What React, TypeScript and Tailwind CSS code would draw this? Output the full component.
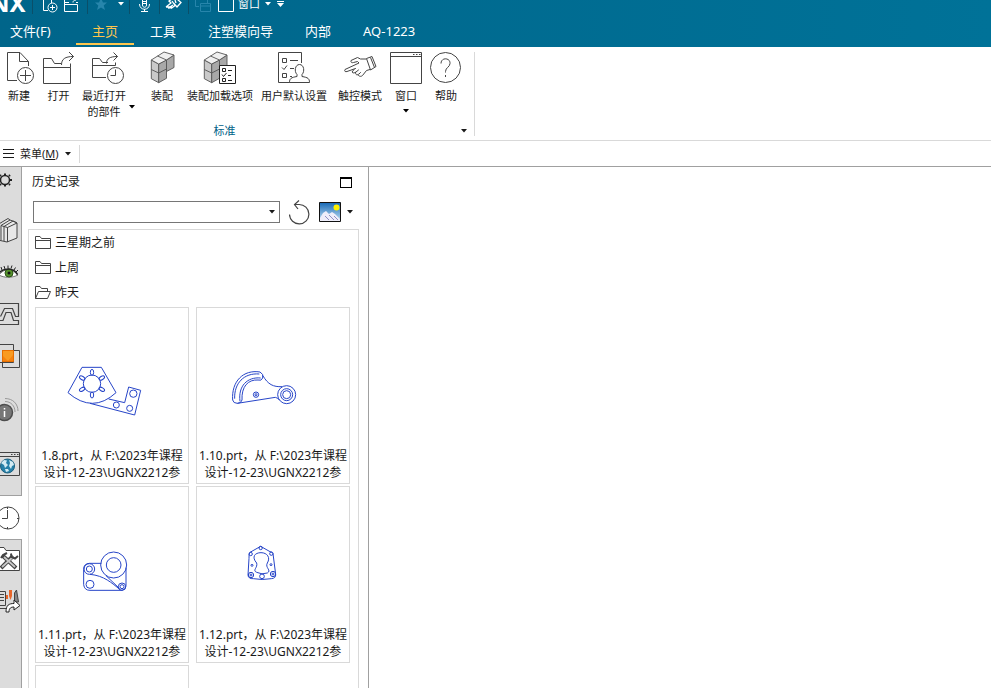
import clsx from 'clsx'
import type { ReactNode } from 'react'

const tabs = ['主页', '工具', '注塑模向导', '内部', 'AQ-1223']

function Caret({ className }: { className?: string }) {
  return (
    <svg width="6" height="4" viewBox="0 0 6 4" fill="currentColor" className={clsx('shrink-0', className)}>
      <path d="M0 0H6L3 3.5Z" />
    </svg>
  )
}

function Line({ w, h, children }: { w: number; h: number; children: ReactNode }) {
  return (
    <svg
      width={w}
      height={h}
      viewBox={`0 0 ${w} ${h}`}
      fill="none"
      stroke="currentColor"
      strokeWidth="1"
      className="shrink-0"
      aria-hidden="true"
    >
      {children}
    </svg>
  )
}

/* ---------- title bar ---------- */

function QuickSeparator({ className }: { className?: string }) {
  return <span className={clsx('h-[14px] w-px shrink-0 bg-[#0a4f69]', className)} />
}

function QuickBar() {
  return (
    <div className="flex h-[14px] items-start">
      <span className="-ml-[10px] flex h-[14px] w-[42px] items-end text-[24px] leading-[23px] font-bold">
        NX
      </span>
      <QuickSeparator />
      <button type="button" aria-label="新建" className="ml-[9px]">
        <Line w={16} h={14}>
          <path d="M1.5 0V10.5H6M9.5 0V3" />
          <circle cx="10.5" cy="7.5" r="4.5" />
          <path d="M8 7.5H13M10.5 5V10" />
        </Line>
      </button>
      <button type="button" aria-label="打开" className="ml-[6px]">
        <Line w={16} h={14}>
          <path d="M.5 0V11.5H13.5V4.5H.5M1 2.5H5M9 2.5C9 1 10 0 12 0M12 2.5H14" />
        </Line>
      </button>
      <QuickSeparator className="ml-[7px]" />
      <button type="button" aria-label="收藏" className="ml-[6px] text-[#2785ab]">
        <svg width="14" height="14" fill="currentColor" className="block">
          <path d="M7 -2L9 2.5H13L9.7 5.5L11 10L7 7.5L3 10L4.3 5.5L1 2.5H5Z" />
        </svg>
      </button>
      <button type="button" aria-label="收藏选项" className="ml-[10px] pt-[2px]">
        <Caret />
      </button>
      <QuickSeparator className="ml-[5px]" />
      <button type="button" aria-label="语音" className="ml-[8px]">
        <Line w={14} h={14}>
          <path d="M4.5 0V5C4.5 8 8.500 8 8.5 5V0M1.5 4C1.5 11 11.5 11 11.5 4M6.5 9V11.5M3 11.5H10M5 1.5H8M5 3.5H8" />
        </Line>
      </button>
      <QuickSeparator className="ml-[7px]" />
      <button type="button" aria-label="触控模式" className="ml-[5px]">
        <Line w={18} h={14}>
          <path d="M1 7L6 3L4 1L7 -1M1 7H5L8 5M3 8L7 7.5M6 8.5L10 5.5L7 1M10 0L11 3M12 -1L16 2.5L12 7L8.5 3" strokeWidth="1.3" />
        </Line>
      </button>
      <QuickSeparator className="ml-[5px]" />
      <button type="button" aria-label="层叠窗口" className="ml-[6px] text-[#2785ab]">
        <Line w={17} h={14}>
          <path d="M.5 0V6.5H4M5.5 3.5H15.5V11.5H5.5ZM5.5 6H15.5M12.5 0V3" />
        </Line>
      </button>
      <button type="button" className="ml-[6px] flex items-start">
        <Line w={17} h={14}>
          <path d="M.5 0V11.5H15.5V0" />
        </Line>
        <span className="ml-[3px] text-[11px] leading-[8px]">窗口</span>
        <Caret className="mt-[2px] ml-[5px]" />
      </button>
      <button type="button" aria-label="自定义快速访问工具栏" className="ml-[6px] pt-px">
        <svg width="7" height="6" fill="currentColor" className="block">
          <path d="M0 0H7V1H0ZM0 2H7L3.5 6Z" />
        </svg>
      </button>
    </div>
  )
}

function TitleBar() {
  return (
    <header className="shrink-0 bg-linear-to-r from-[#00658a] to-[#007298] text-white">
      <QuickBar />
      <nav className="flex h-[33px] pt-[2px] text-[13px] leading-[31px]">
        <button type="button" className="w-[76px] pl-[10px] text-left">
          文件(F)
        </button>
        {tabs.map((tab, i) => (
          <button
            key={tab}
            type="button"
            className={clsx(
              'relative h-[31px] px-4 whitespace-nowrap',
              i === 0 && 'text-[#ffc64d]',
            )}
          >
            {tab}
            {i === 0 && <span className="absolute inset-x-0 bottom-[2px] h-[2px] bg-[#ffc64d]" />}
          </button>
        ))}
      </nav>
    </header>
  )
}

/* ---------- ribbon ---------- */

function NewIcon() {
  return (
    <Line w={30} h={34}>
      <path d="M13 29.5H3.5V1.5H16L24.5 10.5V15M15.5 1.5V10.5H24.5" />
      <circle cx="21.5" cy="24.5" r="8" />
      <path d="M16 24.5H27M21.5 19V30" />
    </Line>
  )
}

function OpenIcon() {
  return (
    <Line w={32} h={34}>
      <path d="M.5 32.5V7.5H8.5L11.5 12.5H18M.5 16.5H27.5V32.5H.5M27.5 16.5V12.5" />
      <path d="M18.5 14C18.5 8 22 5.5 30.5 5.5M26 1L30.5 5.5L26 10" />
    </Line>
  )
}

function RecentIcon() {
  return (
    <Line w={40} h={34}>
      <path d="M22 26.5H8.5V7.5H15.5L18.5 11.5H24M8.5 14.5H31.5V11.5" />
      <path d="M22.5 12.5C22.5 7.5 26 5.5 33.5 5.5M29.5 1.5L33.5 5.5L29.5 9.5" />
      <circle cx="31.5" cy="24.5" r="8" />
      <path d="M31.5 18.5V24.5H26.5" />
    </Line>
  )
}

function Cubes() {
  return (
    <g stroke="#555" strokeWidth=".9" strokeLinejoin="round">
      <path d="M5.3 9L12.7 13V31.7L5.3 27.7Z" fill="#c9c9c9" />
      <path d="M12.7 13L20.5 9V27.3L12.7 31.7Z" fill="#a8a8a8" />
      <path d="M20.5 9L28 4V16.5L20.5 20.5Z" fill="#a8a8a8" />
      <path d="M5.3 9L18 1L28 4L20.5 9L12.7 13Z" fill="#f0f0f0" />
      <path d="M11.5 5L20.5 9M5.3 18.5L12.7 22L20.5 18" />
    </g>
  )
}

function AssemblyIcon() {
  return (
    <Line w={32} h={34}>
      <Cubes />
    </Line>
  )
}

function LoadOptionsIcon() {
  return (
    <Line w={36} h={34}>
      <g transform="translate(-3 0)">
        <Cubes />
      </g>
      <path d="M17.5 14.5H33.5V32.5H17.5Z" fill="#fff" stroke="#222" />
      <path
        d="M20.5 17.5H23.5V20.5H20.5ZM20.5 27.5H23.5V30.5H20.5ZM20 23.5L21.5 25.5L24.5 22M26 19.5H30M26 24.5H29M26 29.5H30"
        stroke="#222"
      />
    </Line>
  )
}

function DefaultsIcon() {
  return (
    <Line w={34} h={34}>
      <path d="M13 31.5H1.5V1.5H24.5V12M5.5 7.5H9.5V11.5H5.5ZM5.5 22.5H9.5V26.5H5.5ZM5 16.5L7 18.5L10 14.5M13 9.5H21M13 17.5H17M13 25.5H15" />
      <path
        d="M12.5 31.5C12.5 27.5 14 26.5 20 25.5V23.5C17 20.5 18 13.5 22.5 13.5S28 20.5 25 23.5V25.5C31 26.5 32.5 27.5 32.5 31.5Z"
        fill="#fff"
      />
    </Line>
  )
}

function TouchIcon() {
  return (
    <Line w={36} h={34}>
      <path
        strokeLinejoin="round"
        strokeLinecap="round"
        d="M24 8H18.5L15.5 6.5L9 9.5C8.500 11.5 10 12 11.5 11.5L15.5 10.5L17 12L3 18.5C2 20.5 3.5 21 5 20.5L13.5 17.5M12 18.5L10 21C11 22.5 12.5 22 14 21L16.5 19M13.5 21.5C13.5 24 15 24.5 17 23L18.5 21.5M16 24C17.5 26 19.5 25.5 20.5 24.5L24.5 19.5L28 18.5"
      />
      <path strokeLinejoin="round" d="M24.5 7.5L30 5.5L34 15.5L28.5 19ZM28.5 6.5L32.5 16.5" />
    </Line>
  )
}

function WindowIcon() {
  return (
    <Line w={32} h={34}>
      <path d="M.5 1.5H31.5V32.5H.5ZM.5 5.5H31.5" />
      <path d="M23 3.5H24.5M26 3.5H27.5M29 3.5H30.5" />
    </Line>
  )
}

function HelpIcon() {
  return (
    <Line w={32} h={34}>
      <circle cx="15.5" cy="16.5" r="15" />
      <path d="M11 12.5C11 6 20.5 6.5 20 12.5C20 16 15.5 16.5 15.5 20.5V21.5M15.5 24V26" />
    </Line>
  )
}

interface RibbonButtonProps {
  icon: ReactNode
  label: ReactNode
  className?: string
  dropdown?: 'below' | 'beside'
}

function RibbonButton({ icon, label, className, dropdown }: RibbonButtonProps) {
  return (
    <button type="button" className={clsx('flex shrink-0 items-start', className)}>
      <span className="flex flex-1 flex-col items-center text-[#444]">
        {icon}
        <span className="mt-[3px] text-[11px] leading-4 whitespace-nowrap text-[#1a1a1a]">{label}</span>
        {dropdown === 'below' && <Caret className="mt-[5px] text-black" />}
      </span>
      {dropdown === 'beside' && <Caret className="mt-[54px] text-black" />}
    </button>
  )
}

function Ribbon() {
  return (
    <section className="flex h-[94px] shrink-0 border-b border-[#d9d9d9] bg-white">
      <div className="flex flex-col">
        <div className="flex h-[75px] items-start pt-1">
          <RibbonButton className="w-[38px]" icon={<NewIcon />} label="新建" />
          <RibbonButton className="w-[41px]" icon={<OpenIcon />} label="打开" />
          <RibbonButton
            className="w-[56px]"
            icon={<RecentIcon />}
            label={
              <>
                最近打开
                <br />
                的部件
              </>
            }
            dropdown="beside"
          />
          <RibbonButton className="ml-[9px] w-9" icon={<AssemblyIcon />} label="装配" />
          <RibbonButton className="ml-1 w-[72px]" icon={<LoadOptionsIcon />} label="装配加载选项" />
          <RibbonButton className="ml-[2px] w-[72px]" icon={<DefaultsIcon />} label="用户默认设置" />
          <RibbonButton className="ml-[6px] w-12" icon={<TouchIcon />} label="触控模式" />
          <RibbonButton className="ml-1 w-9" icon={<WindowIcon />} label="窗口" dropdown="below" />
          <RibbonButton className="mr-[3px] ml-1 w-9" icon={<HelpIcon />} label="帮助" />
        </div>
        <div className="flex items-center text-[11px] leading-[18px]">
          <span className="flex-1 pr-3 text-center text-[#005f87]">标准</span>
          <button type="button" aria-label="标准组选项">
            <Caret />
          </button>
        </div>
      </div>
      <span className="mt-[5px] mb-1 ml-[7px] w-px bg-[#d9d9d9]" />
    </section>
  )
}

function MenuRow() {
  return (
    <div className="flex h-[26px] shrink-0 items-center border-b border-[#a0a0a0] bg-white">
      <button type="button" className="flex items-center pl-[3px] text-[11px] leading-[18px]">
        <Line w={11} h={11}>
          <path d="M0 1.5H11M0 5.5H11M0 9.5H11" />
        </Line>
        <span className="ml-[6px] whitespace-nowrap">
          菜单(<u>M</u>)
        </span>
        <Caret className="ml-[6px]" />
      </button>
      <span className="ml-2 h-[18px] w-px bg-[#d9d9d9]" />
    </div>
  )
}

/* ---------- resource bar ---------- */

const resources = [
  {
    label: '资源条选项',
    className: 'h-[26px]',
    icon: (
      <>
        <circle cx="5" cy="13" r="4.5" strokeWidth="1.5" stroke="#222" />
        <path
          d="M5 6.500V8.500M5 17.500V19.500M9.500 13H12M9 9L10 8M9 17L10 18M1 9L0 8M1 17L0 18"
          strokeWidth="2"
          stroke="#222"
        />
      </>
    ),
  },
  {
    label: '重用库',
    className: 'mt-4 h-[42px]',
    icon: (
      <>
        <path d="M-2 7.500L8 1.500L10 3M-2 7.500V23L7 25L17 21V6L14 4.500L10 3L1 8.500V23.500" fill="#e8e8e8" />
        <path d="M1 8.500L4 9.500V24M4 9.500L13 4L17 6L7.500 10.500L4 9.500M7.500 10.500V25" />
      </>
    ),
  },
  {
    label: '视图',
    className: 'h-10',
    icon: (
      <>
        <path d="M-1 17C4 10 12 10 18 17C12 20 4 20 -1 17Z" fill="#fff" strokeWidth=".7" />
        <circle cx="9" cy="15" r="4" fill="#55912c" stroke="#2d5518" />
        <circle cx="9" cy="15" r="1.5" fill="#111" stroke="none" />
        <path d="M-1 15C4 10 13 9 17.500 16.500" stroke="#222" strokeWidth="1.5" />
        <path d="M2 12L1 9M5 11L4 8M8 10.5V7.500M11 10.5L12 7.500M14 12L15.500 9.500M16 14L18 12" stroke="#222" />
      </>
    ),
  },
  {
    label: '装配导航器',
    className: 'mt-[2px] h-[42px]',
    icon: (
      <path
        d="M-1 2.5H18.5V15.5H15.5L12.5 7.5H4.5L.5 15.5M-1 23.5H18.5V19.5H13.5L11 11.5H6L3 19.5H-1"
        strokeWidth="1.2"
      />
    ),
  },
  {
    label: '约束导航器',
    className: 'h-[42px]',
    icon: (
      <>
        <path d="M-1 1.5H13.5V19.5H-1ZM2.5 7.5H19.5V24.5H2.5Z" />
        <path d="M2.5 7.5H13.5V18.5H2.5Z" fill="#f99b22" stroke="#e86f00" />
        <path d="M3 18V13L8 18ZM8 18L13 12V18Z" fill="#f58210" stroke="none" />
      </>
    ),
  },
  {
    label: '部件信息',
    className: 'mt-3 h-[42px]',
    icon: (
      <>
        <circle cx="4.500" cy="15.500" r="8" fill="#777" stroke="#4d4d4d" strokeWidth="1.5" />
        <path d="M4.500 14V20M4.500 11V12.500" stroke="#fff" strokeWidth="1.5" />
        <path d="M5 4.500C11 4.500 15 9 15 15M5 1.500C13 1.500 18 7 18 14" stroke="#999" />
      </>
    ),
  },
  {
    label: '网页浏览器',
    className: 'mt-3 h-[42px]',
    icon: (
      <>
        <path d="M-1 1.5H19.5V24.5H-1M-1 5.5H19.5M11 3.5H12.500M14 3.5H15.500M17 3.5H18.500" />
        <circle cx="7.500" cy="15" r="7" fill="#2680a8" stroke="#1b607f" />
        <path
          d="M1 12L4 9L7 9.500L6 12L8 14L5 17L4 14ZM9 9L13 11L14 14L12 15L11 18L9 15L10 12ZM5 18L8 18L9 20L6 21Z"
          fill="#d3ebf3"
          stroke="none"
        />
      </>
    ),
  },
  {
    label: '历史记录',
    className: 'mt-[10px] -mr-px h-[45px] border-y border-[#a0a0a0] bg-white',
    icon: (
      <>
        <circle cx="8" cy="13" r="11" />
        <path d="M7.500 5V13.500H2M7.500 2V4M19 13.500H17M7.500 22V24" />
      </>
    ),
  },
  {
    label: '工艺资源',
    className: 'h-10',
    icon: (
      <>
        <path d="M-1 .5H4L6 3.5H19.5V23.5H-1" fill="#fff" />
        <path d="M3 9L16 21M13 9L1 21" stroke="#444" strokeWidth="4" />
        <path d="M4 10L15 20M13 10L2 20" stroke="#c8c8c8" strokeWidth="1.8" />
        <path d="M1 11L3 8L7 6M11 6.500L11.500 10L15 11.500L18 9" stroke="#444" strokeWidth="2" />
      </>
    ),
  },
  {
    label: '加工向导',
    className: 'h-[42px]',
    icon: (
      <>
        <path d="M-1 3.500H5.500V17.500H-1M0 6.500H4M0 9.500H4M0 12.500H4M-1 20.500H7" fill="#ddd" />
        <path d="M9 2H12V8L10.500 12L9 8ZM6 7H8V11H6Z" fill="#e8662a" stroke="none" />
        <path d="M14.500 14V5L16.500 2L18.500 14Z" fill="#888" />
        <path d="M6 24C6 17 9 15.500 14 15.500V12L20 17.500L14 22V19C11 19 9 20 9 24Z" fill="#fff" stroke="#222" />
      </>
    ),
  },
]

function ResourceBar() {
  return (
    <aside className="flex w-[22px] shrink-0 flex-col border-r border-[#a0a0a0] bg-[#dcdcdc] text-[#444]">
      {resources.map((r) => (
        <button
          key={r.label}
          type="button"
          aria-label={r.label}
          className={clsx('flex shrink-0 items-center', r.className)}
        >
          <Line w={21} h={26}>
            {r.icon}
          </Line>
        </button>
      ))}
    </aside>
  )
}

/* ---------- history panel ---------- */

function FolderIcon({ open }: { open?: boolean }) {
  return (
    <Line w={16} h={14}>
      {open ? (
        <path d="M.5 12.5V.5H5L6.500 2.500H12.500V5.500M.5 12.5L3.500 5.500H15.500L12.500 12.5Z" />
      ) : (
        <path d="M.5 12.5V.5H5L6.500 2.500H15.500V12.5ZM.5 4.500H15.500" />
      )}
    </Line>
  )
}

const groups = [
  { name: '三星期之前', open: false },
  { name: '上周', open: false },
  { name: '昨天', open: true },
]

const slots = [0, 60, 120, 180, 240, 300]

const parts = [
  {
    name: '1.8.prt',
    viewBox: '18 -126 456 417',
    drawing: (
      <>
        <path d="M156 52H214L258 128Q188 192 114 128Z" />
        <circle cx="186" cy="101" r="26" />
        {slots.map((angle) => (
          <ellipse key={angle} cx="186" cy="67" rx="5" ry="9" transform={`rotate(${angle} 186 101)`} />
        ))}
        <path d="M180 160L314 195L332 121L296 111L284 158L236 147" />
        <circle cx="310" cy="131" r="11" />
        <circle cx="259" cy="165" r="9" />
        <circle cx="299" cy="175" r="9" />
      </>
    ),
  },
  {
    name: '1.10.prt',
    viewBox: '21 -126 456 417',
    drawing: (
      <>
        <path d="M128 150C124 94 160 58 210 66Q222 72 218 84Q214 94 204 90C174 88 154 110 156 150Q154 160 142 160Q130 160 128 150Z" />
        <path d="M134 146C132 100 162 68 208 72M150 154C144 108 172 80 212 84" />
        <path d="M218 76C234 104 250 111 276 110M142 160L256 142Q264 144 268 150" />
        <circle cx="290" cy="134" r="27" />
        <circle cx="290" cy="134" r="18" />
        <circle cx="290" cy="134" r="12" />
        <circle cx="198" cy="134" r="8" />
        <circle cx="198" cy="134" r="3" />
      </>
    ),
  },
  {
    name: '1.11.prt',
    viewBox: '18 -144 456 417',
    drawing: (
      <>
        <path d="M214 85H178Q161 86 161 103V149Q163 166 180 166H276Q288 164 288 152V98" />
        <circle cx="251" cy="90" r="39" />
        <circle cx="251" cy="90" r="22" />
        <circle cx="178" cy="102" r="16" />
        <circle cx="178" cy="102" r="9" />
        <circle cx="180" cy="148" r="12" />
        <circle cx="276" cy="155" r="11" />
        <circle cx="276" cy="155" r="6" />
        <path d="M180 118C222 122 246 144 270 164M228 122L268 160" />
      </>
    ),
  },
  {
    name: '1.12.prt',
    viewBox: '21 -144 456 417',
    drawing: (
      <>
        <path d="M212 34L180 52Q176 56 177 70L174 120Q175 132 190 131Q216 136 244 131Q258 130 257 118L249 56Q246 50 240 50Z" />
        <path d="M200 112C186 106 204 98 200 84C184 66 194 53 213 53C232 53 242 68 232 84C224 98 246 106 232 114Q216 120 200 112Z" />
        <circle cx="212" cy="39" r="5" />
        <circle cx="182" cy="57" r="5" />
        <circle cx="244" cy="56" r="5" />
        <circle cx="186" cy="91" r="3" />
        <circle cx="243" cy="89" r="3" />
        <circle cx="183" cy="120" r="8" />
        <circle cx="183" cy="120" r="3" />
        <circle cx="249" cy="117" r="8" />
        <circle cx="249" cy="117" r="3" />
        <circle cx="216" cy="124" r="7" />
      </>
    ),
  },
]

const cardClass = 'flex h-[177px] flex-col items-center overflow-hidden border border-[#d9d9d9] bg-white'

function HistoryPanel() {
  return (
    <section className="flex w-[347px] shrink-0 flex-col border-r border-[#a0a0a0] bg-white">
      <div className="flex h-[30px] shrink-0 items-center justify-between pr-4 pl-[10px] text-[12px]">
        <h2>历史记录</h2>
        <button type="button" aria-label="最大化" className="h-[11px] w-3 border border-t-2 border-black" />
      </div>
      <div className="flex h-8 shrink-0 items-center pb-[3px] pl-[11px]">
        <div className="relative flex items-center">
          <select
            aria-label="筛选历史记录"
            className="h-[22px] w-[247px] appearance-none border border-[#767676] bg-white text-[12px]"
          />
          <Caret className="pointer-events-none absolute right-[5px]" />
        </div>
        <button type="button" aria-label="刷新" className="ml-[9px] text-[#444]">
          <Line w={21} h={26}>
            <path d="M.5 15.5A9.7 9.7 0 1 0 10 5.5H5.5M10 1.5L5.5 5.5L9 10" strokeWidth="1.2" />
          </Line>
        </button>
        <button type="button" aria-label="预览" className="ml-[9px]">
          <svg width="22" height="20" className="block">
            <defs>
              <linearGradient id="sky" x1="0" y1="0" x2="0" y2="1">
                <stop offset="0" stopColor="#1768b5" />
                <stop offset="1" stopColor="#c6e4f7" />
              </linearGradient>
            </defs>
            <path d="M.5 .5H21.5V19.5H.5Z" fill="url(#sky)" />
            <circle cx="17.5" cy="5.5" r="3" fill="#fff200" />
            <path d="M1 16L4 11L7 9L10 12L13 10L16 12L21 17V19H1Z" fill="#eeeefa" />
            <path d="M6 14L10 18M10 13L15 18M15 14L19 18" stroke="#8f8fc4" />
            <path d="M.5 .5H21.5V19.5H.5Z" fill="none" stroke="#111" />
          </svg>
        </button>
        <button type="button" aria-label="预览选项" className="ml-[6px]">
          <Caret />
        </button>
      </div>
      <div className="mr-[9px] ml-[6px] min-h-0 flex-1 overflow-hidden border-x border-t border-[#d9d9d9] px-[6px]">
        <ul className="text-[12px]">
          {groups.map((group) => (
            <li key={group.name}>
              <button type="button" className="flex h-[25px] items-center gap-1">
                <span className="text-[#444]">
                  <FolderIcon open={group.open} />
                </span>
                {group.name}
              </button>
            </li>
          ))}
        </ul>
        <div className="grid grid-cols-[154px_154px] gap-x-[7px] gap-y-[2px] pt-[2px]">
          {parts.map((part) => (
            <button key={part.name} type="button" className={cardClass}>
              <svg
                width="152"
                height="139"
                viewBox={part.viewBox}
                fill="none"
                stroke="#2745c8"
                strokeWidth="3"
                className="shrink-0"
              >
                {part.drawing}
              </svg>
              <span className="text-[12px] leading-[17px] whitespace-nowrap">
                {part.name}，从 F:\2023年课程
                <br />
                设计-12-23\UGNX2212参
              </span>
            </button>
          ))}
          <button type="button" aria-label="1.13.prt" className={cardClass} />
        </div>
      </div>
    </section>
  )
}

export default function App() {
  return (
    <div className="flex h-screen flex-col overflow-hidden bg-white font-['Noto_Sans','Noto_Sans_CJK_SC',sans-serif] text-[#1a1a1a]">
      <TitleBar />
      <Ribbon />
      <MenuRow />
      <div className="flex min-h-0 flex-1">
        <ResourceBar />
        <HistoryPanel />
        <main className="min-w-0 flex-1 bg-white" />
      </div>
    </div>
  )
}
